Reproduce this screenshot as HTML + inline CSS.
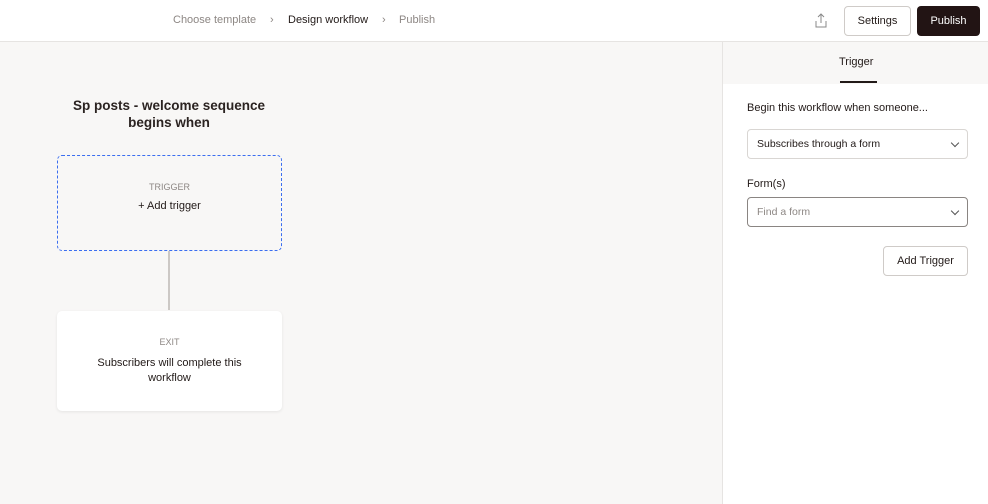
<!DOCTYPE html>
<html><head><style>
*{box-sizing:border-box;margin:0;padding:0}
body{width:988px;height:504px;overflow:hidden;font-family:"Liberation Sans",sans-serif;background:#f8f7f6;color:#221a18;position:relative}
.top{position:absolute;left:0;top:0;width:988px;height:42px;background:#fff;border-bottom:1px solid #e6e4e2}
.crumb{position:absolute;top:14px;font-size:11px}
.btn{position:absolute;top:6px;height:30px;border-radius:4px;font-size:11px;display:flex;align-items:center;justify-content:center}
.side{position:absolute;left:722px;top:42px;width:266px;height:462px;background:#fff;border-left:1px solid #e6e4e2}
.sel{position:absolute;left:24px;width:221px;height:30px;border:1px solid #d9d6d3;border-radius:4px;font-size:10.5px;padding:0 9px;display:flex;align-items:center}
.chev{position:absolute;right:9px;top:10px;width:6px;height:6px;border-right:1px solid #555;border-bottom:1px solid #555;transform:rotate(45deg)}
.card{position:absolute;left:57px;width:225px;border-radius:5px;text-align:center}
</style></head><body>
<div class="top">
<div class="crumb" style="left:173px;top:14px;color:#8d8784">Choose template</div>
<div class="crumb" style="left:270px;top:14px;color:#8d8784">›</div>
<div class="crumb" style="left:288px;top:14px;color:#221a18">Design workflow</div>
<div class="crumb" style="left:382px;top:14px;color:#8d8784">›</div>
<div class="crumb" style="left:399px;top:14px;color:#8d8784">Publish</div>
<svg style="position:absolute;left:814px;top:13px" width="14" height="16" viewBox="0 0 14 16" fill="none" stroke="#888" stroke-width="1"><path d="M7 1v9M4 4l3-3 3 3M2 8v6h10V8"/></svg>
<div class="btn" style="left:844px;width:67px;border:1px solid #cfcbc8;background:#fff">Settings</div>
<div class="btn" style="left:917px;width:63px;background:#221414;color:#fff">Publish</div>
</div>
<div style="position:absolute;left:40px;top:97px;width:258px;text-align:center;font-size:13.5px;line-height:17px;font-weight:bold;color:#2b2321">Sp posts - welcome sequence<br>begins when</div>
<div class="card" style="top:155px;height:96px;border:1px dashed #3b6ef0">
<div style="margin-top:26px;font-size:9px;color:#8d8784">TRIGGER</div>
<div style="margin-top:8px;font-size:11px">+ Add trigger</div></div>
<div style="position:absolute;left:168px;top:251px;width:2px;height:59px;background:#ccc8c5"></div>
<div class="card" style="top:311px;height:100px;background:#fff;box-shadow:0 1px 3px rgba(0,0,0,.08)">
<div style="margin-top:26px;font-size:9px;color:#8d8784">EXIT</div>
<div style="margin-top:9px;font-size:11px;line-height:15px">Subscribers will complete this<br>workflow</div></div>
<div class="side">
<div style="position:absolute;left:0;top:0;width:265px;height:42px;background:#f8f7f6"></div>
<div style="position:absolute;left:116px;top:14px;font-size:11px">Trigger</div>
<div style="position:absolute;left:117px;top:39px;width:37px;height:2px;background:#221a18"></div>
<div style="position:absolute;left:24px;top:60px;font-size:11px">Begin this workflow when someone...</div>
<div class="sel" style="top:87px">Subscribes through a form<span class="chev"></span></div>
<div style="position:absolute;left:24px;top:136px;font-size:11px">Form(s)</div>
<div class="sel" style="top:155px;border-color:#8a8582;color:#8d8784">Find a form<span class="chev"></span></div>
<div class="btn" style="left:160px;top:204px;width:85px;border:1px solid #cfcbc8">Add Trigger</div>
</div>
</body></html>
